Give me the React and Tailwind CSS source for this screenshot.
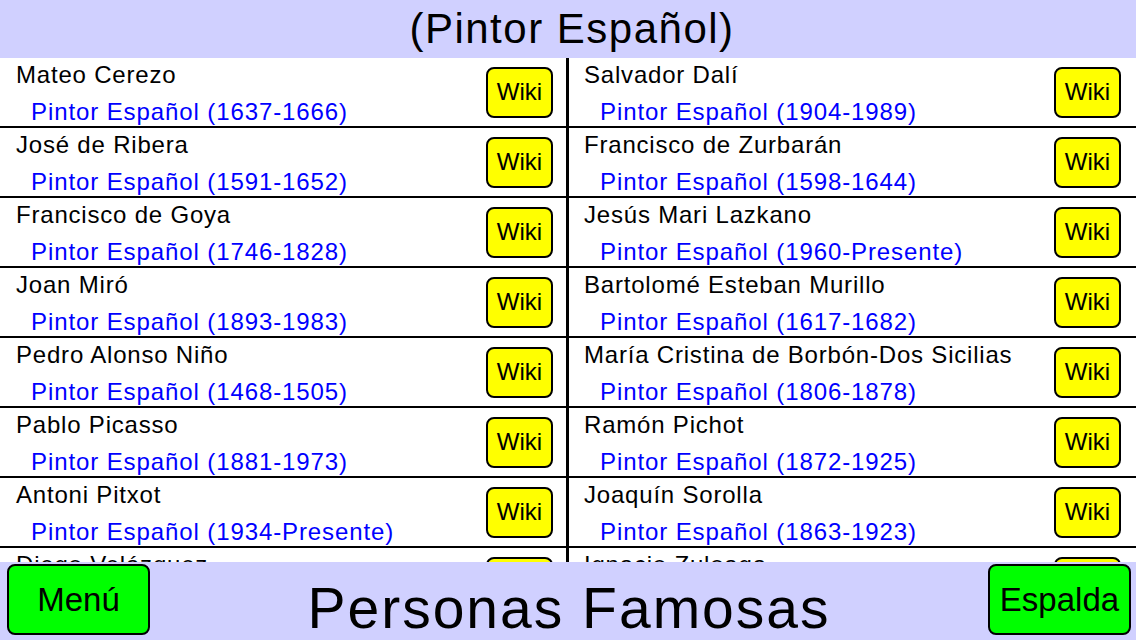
import React from "react";

// Painters shown in the two columns of the list
const leftPainters = [
  { name: "Mateo Cerezo", years: "1637-1666" },
  { name: "José de Ribera", years: "1591-1652" },
  { name: "Francisco de Goya", years: "1746-1828" },
  { name: "Joan Miró", years: "1893-1983" },
  { name: "Pedro Alonso Niño", years: "1468-1505" },
  { name: "Pablo Picasso", years: "1881-1973" },
  { name: "Antoni Pitxot", years: "1934-Presente" },
  { name: "Diego Velázquez", years: "1599-1660" },
];

const rightPainters = [
  { name: "Salvador Dalí", years: "1904-1989" },
  { name: "Francisco de Zurbarán", years: "1598-1644" },
  { name: "Jesús Mari Lazkano", years: "1960-Presente" },
  { name: "Bartolomé Esteban Murillo", years: "1617-1682" },
  { name: "María Cristina de Borbón-Dos Sicilias", years: "1806-1878" },
  { name: "Ramón Pichot", years: "1872-1925" },
  { name: "Joaquín Sorolla", years: "1863-1923" },
  { name: "Ignacio Zuloaga", years: "1870-1945" },
];

const PainterRow = ({ painter, right }) => (
  <div className="flex h-[70px] shrink-0 items-center border-b-2 border-black">
    <div
      className={
        "flex h-full min-w-0 flex-1 flex-col pt-[3px] " +
        (right ? "pl-[15px]" : "pl-[16px]")
      }
    >
      <div className="h-[28px] whitespace-nowrap text-[24px] leading-[28px] tracking-[0.8px] text-black">
        {painter.name}
      </div>
      <div
        className={
          "mt-[9px] h-[28px] whitespace-nowrap text-[24px] leading-[28px] tracking-[0.9px] text-[#0000ff] " +
          (right ? "pl-[16px]" : "pl-[15px]")
        }
      >
        Pintor Español ({painter.years})
      </div>
    </div>
    <button
      className={
        "h-[51px] w-[67px] shrink-0 rounded-[8px] border-2 border-black bg-[#ffff00] text-[24px] leading-none text-black " +
        (right ? "mr-[15px]" : "mr-[13px]")
      }
    >
      Wiki
    </button>
  </div>
);

const App = () => {
  return (
    <div
      className="flex h-[640px] w-full flex-col overflow-hidden bg-white"
      style={{ fontFamily: '"Liberation Sans", Arial, sans-serif' }}
    >
      <header className="flex h-[58px] shrink-0 items-center justify-center bg-[#d0d0ff] pl-[8px]">
        <h1 className="text-[42px] leading-none tracking-[1.5px] text-black">
          (Pintor Español)
        </h1>
      </header>

      <div className="flex min-h-0 flex-1 overflow-hidden">
        <div className="flex w-[569px] shrink-0 flex-col border-r-[3px] border-black">
          {leftPainters.map((p) => (
            <PainterRow key={p.name} painter={p} />
          ))}
        </div>
        <div className="flex min-w-0 flex-1 flex-col">
          {rightPainters.map((p) => (
            <PainterRow key={p.name} painter={p} right />
          ))}
        </div>
      </div>

      <footer className="flex h-[78px] shrink-0 items-start bg-[#d0d0ff] pl-[7px] pr-[5px] pt-[2px]">
        <button className="h-[71px] w-[143px] shrink-0 rounded-[8px] border-2 border-black bg-[#00ff00] text-[33px] leading-none text-black">
          Menú
        </button>
        <div className="flex h-[76px] flex-1 items-end justify-center pb-[3px]">
          <span className="text-[57px] leading-none tracking-[2px] text-black">
            Personas Famosas
          </span>
        </div>
        <button className="h-[71px] w-[143px] shrink-0 rounded-[8px] border-2 border-black bg-[#00ff00] text-[33px] leading-none text-black">
          Espalda
        </button>
      </footer>
    </div>
  );
};

export default App;
